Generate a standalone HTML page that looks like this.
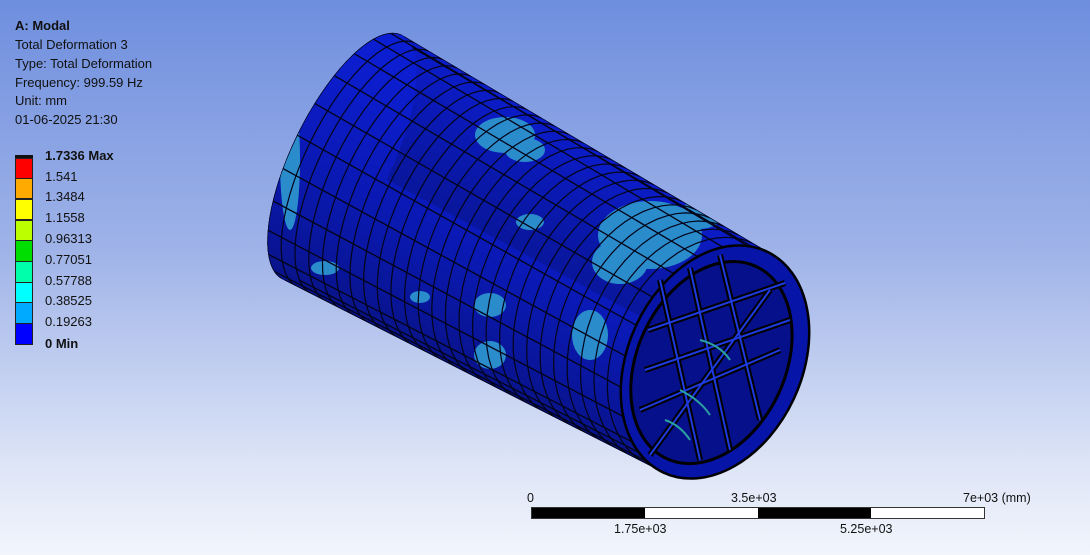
<!DOCTYPE html>
<html><head><meta charset="utf-8"><style>
html,body{margin:0;padding:0}
body{width:1090px;height:555px;overflow:hidden;position:relative;background:linear-gradient(#6e8ede 0%,#9fb3e8 45%,#dfe6f7 85%,#f2f5fc 100%);font-family:"Liberation Sans",sans-serif;color:#111}
.t{position:absolute;left:15px;font-size:13px;line-height:15px;white-space:nowrap}
.l{position:absolute;left:45px;font-size:13px;line-height:15px}
.box{position:absolute;left:15px;width:18px;border:1px solid #222;box-sizing:border-box}
.s{position:absolute;font-size:12.5px;line-height:14px;white-space:nowrap}
</style></head><body>
<svg id="sv" width="1090" height="555" style="position:absolute;left:0;top:0"></svg>
<div class="t" style="top:18px;font-weight:bold">A: Modal</div>
<div class="t" style="top:37px">Total Deformation 3</div>
<div class="t" style="top:56px">Type: Total Deformation</div>
<div class="t" style="top:75px">Frequency: 999.59 Hz</div>
<div class="t" style="top:93px">Unit: mm</div>
<div class="t" style="top:112px">01-06-2025 21:30</div>
<div style="position:absolute;left:15px;top:155px;width:18px;height:4px;background:#111"></div>
<div class="box" style="top:158px;height:21px;background:#f00"></div>
<div class="box" style="top:178px;height:21px;background:#ffaa00"></div>
<div class="box" style="top:199px;height:21px;background:#ffff00"></div>
<div class="box" style="top:220px;height:21px;background:#bbff00"></div>
<div class="box" style="top:240px;height:22px;background:#00dd00"></div>
<div class="box" style="top:261px;height:22px;background:#00ffaa"></div>
<div class="box" style="top:282px;height:21px;background:#00ffff"></div>
<div class="box" style="top:302px;height:22px;background:#00aaff"></div>
<div class="box" style="top:323px;height:22px;background:#0000ff"></div>
<div class="l" style="top:148px;font-weight:bold">1.7336 Max</div>
<div class="l" style="top:169px">1.541</div>
<div class="l" style="top:189px">1.3484</div>
<div class="l" style="top:210px">1.1558</div>
<div class="l" style="top:231px">0.96313</div>
<div class="l" style="top:252px">0.77051</div>
<div class="l" style="top:273px">0.57788</div>
<div class="l" style="top:293px">0.38525</div>
<div class="l" style="top:314px">0.19263</div>
<div class="l" style="top:336px;font-weight:bold">0 Min</div>
<div style="position:absolute;left:531px;top:507px;width:454px;height:12px;box-sizing:border-box;border:1px solid #333;background:#fff"></div>
<div style="position:absolute;left:532px;top:508px;width:113px;height:10px;background:#000"></div>
<div style="position:absolute;left:758px;top:508px;width:113px;height:10px;background:#000"></div>
<div class="s" style="left:527px;top:491px">0</div>
<div class="s" style="left:731px;top:491px">3.5e+03</div>
<div class="s" style="left:963px;top:491px">7e+03 (mm)</div>
<div class="s" style="left:614px;top:522px">1.75e+03</div>
<div class="s" style="left:840px;top:522px">5.25e+03</div>
<script>
(function(){
var sv=document.getElementById('sv');
var L={cx:342,cy:157,a:50,b:136,r:26*Math.PI/180},R={cx:715,cy:362,a:87,b:122,r:25*Math.PI/180};
function E(t){return{cx:L.cx+(R.cx-L.cx)*t,cy:L.cy+(R.cy-L.cy)*t,a:L.a+(R.a-L.a)*t,b:L.b+(R.b-L.b)*t,r:L.r+(R.r-L.r)*t};}
function P(e,th){var x=e.a*Math.cos(th),y=e.b*Math.sin(th);return[e.cx+x*Math.cos(e.r)-y*Math.sin(e.r),e.cy+x*Math.sin(e.r)+y*Math.cos(e.r)];}
var h='<defs><clipPath id="cp">';var body='';
var N=72;
for(var i=0;i<N;i++){var t1=i/N*2*Math.PI,t2=(i+1.05)/N*2*Math.PI;
var a=P(L,t1),b=P(L,t2),c=P(R,t2),d=P(R,t1);
var pts=a.join(',')+' '+b.join(',')+' '+c.join(',')+' '+d.join(',');
h+='<polygon points="'+pts+'"/>';
var s=Math.sin(t1+0.4);var k=(1-s)/2;
var rr=Math.round(8+4*k),gg=Math.round(18+12*k),bb=Math.round(130+80*k);
body+='<polygon points="'+pts+'" fill="rgb('+rr+','+gg+','+bb+')"/>';}
h+='<ellipse cx="'+L.cx+'" cy="'+L.cy+'" rx="'+L.a+'" ry="'+L.b+'" transform="rotate(26 '+L.cx+' '+L.cy+')"/></clipPath></defs>';
h+='<ellipse cx="'+L.cx+'" cy="'+L.cy+'" rx="'+L.a+'" ry="'+L.b+'" transform="rotate(26 '+L.cx+' '+L.cy+')" fill="#0c1cc8"/>';
h+=body;
h+='<g clip-path="url(#cp)">';
var pat=[[505,135,30,18],[525,150,20,12],[650,235,52,34],[620,262,28,22],[700,215,22,14],[590,335,18,25],[490,305,16,12],[490,355,16,14],[290,160,10,70],[325,268,14,7],[420,297,10,6],[530,222,14,8]];
pat.forEach(function(p){h+='<ellipse cx="'+p[0]+'" cy="'+p[1]+'" rx="'+p[2]+'" ry="'+p[3]+'" fill="#2b8ccc"/>';});
for(var j=0;j<=26;j++){var e=E(j/26);var d='';for(var k=0;k<=30;k++){var th=Math.PI/2+k/30*Math.PI;var q=P(e,th);d+=(k?'L':'M')+q[0].toFixed(1)+','+q[1].toFixed(1);}h+='<path d="'+d+'" fill="none" stroke="#020418" stroke-width="1.2"/>';}
for(var m=0;m<=14;m++){var th=Math.PI*0.4+m/14*Math.PI*1.2;var a=P(L,th),b=P(R,th);h+='<line x1="'+a[0]+'" y1="'+a[1]+'" x2="'+b[0]+'" y2="'+b[1]+'" stroke="#020418" stroke-width="1.3"/>';}
h+='</g>';
var tr='rotate(25 715 362)';
h+='<ellipse cx="715" cy="362" rx="87" ry="122" transform="'+tr+'" fill="#0714a8" stroke="#000" stroke-width="2.5"/>';
h+='<ellipse cx="712" cy="364" rx="74" ry="106" transform="'+tr+'" fill="#06108a" stroke="#000" stroke-width="3"/>';
var ln=[[648,330,785,283],[640,410,780,350],[660,280,700,460],[720,255,760,420],[650,455,770,290],[645,370,790,320],[690,268,730,450]];
var g1='',g2='';ln.forEach(function(l){var s='x1="'+l[0]+'" y1="'+l[1]+'" x2="'+l[2]+'" y2="'+l[3]+'"';g1+='<line '+s+'/>';g2+='<line '+s+'/>';});
h+='<g stroke="#000" stroke-width="6">'+g1+'</g><g stroke="#1e3ae0" stroke-width="2">'+g2+'</g>';
h+='<g stroke="#2aa0a0" stroke-width="2" fill="none"><path d="M680 390 q20 10 30 25"/><path d="M665 420 q15 5 25 20"/><path d="M700 340 q20 5 30 20"/></g>';
sv.innerHTML=h;
})();
</script>
</body></html>
